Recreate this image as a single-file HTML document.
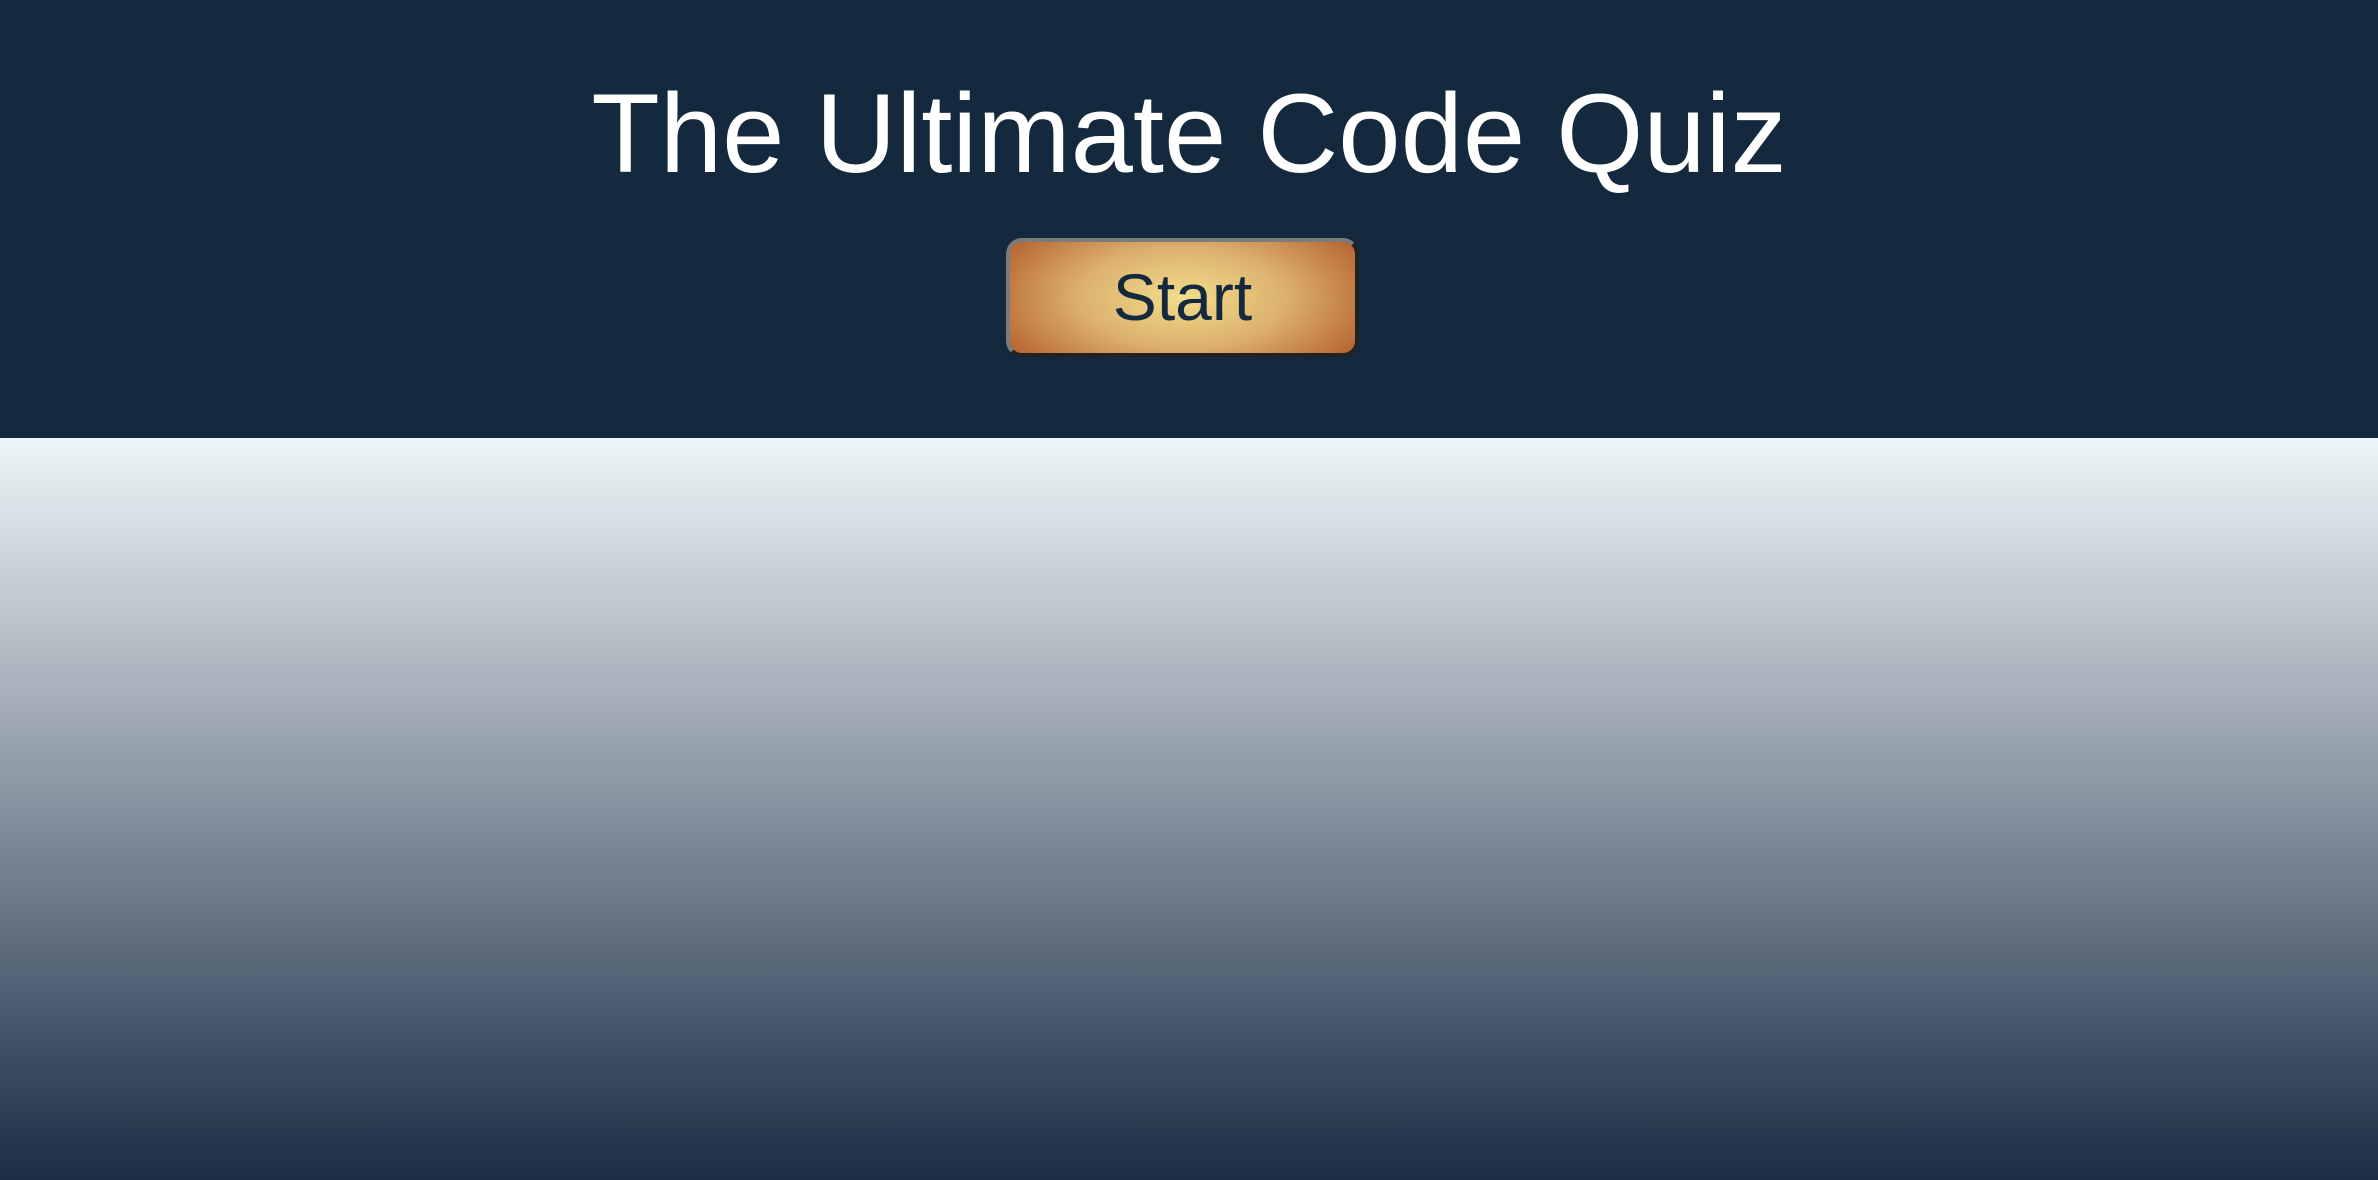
<!DOCTYPE html>
<html><head><meta charset="utf-8"><style>
html,body{margin:0;padding:0;width:2378px;height:1180px;overflow:hidden;font-family:"Liberation Sans",Arial,sans-serif}
header{position:absolute;left:0;top:0;width:2378px;height:438px;background:#14283e}
h1{position:absolute;left:0;width:2378px;top:69px;margin:0;text-align:center;color:#fff;font-weight:normal;font-size:112px;line-height:130px}
.btn{position:absolute;left:1006px;top:238px;width:345px;height:111px;border:4px solid;border-color:#7b7b7b #222 #222 #7b7b7b;border-radius:16px;background:radial-gradient(ellipse 60% 90% at center,#f1de8a 0%,#dcb06e 50%,#b5622f 100%);color:#14283e;font-size:66px;text-align:center;line-height:111px}
main{position:absolute;left:0;top:438px;width:2378px;height:742px;background:linear-gradient(#eef5f8,#1b2d44)}
</style></head><body>
<header><h1>The Ultimate Code Quiz</h1><div class="btn">Start</div></header>
<main></main>
</body></html>
